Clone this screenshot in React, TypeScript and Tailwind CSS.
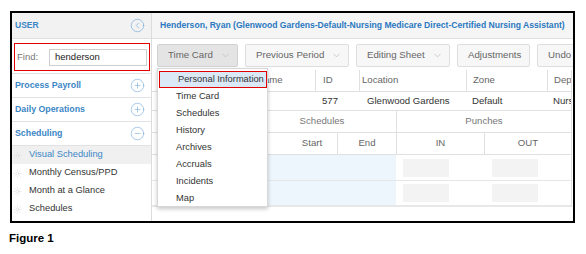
import { CircleChevronLeft, CirclePlus, CircleMinus, ChevronDown, Sun } from 'lucide-react';

const menuItems = [
  'Personal Information',
  'Time Card',
  'Schedules',
  'History',
  'Archives',
  'Accruals',
  'Incidents',
  'Map',
];

function ToolButton({ label, active, chevron, width }: { label: string; active?: boolean; chevron?: boolean; width: string }) {
  return (
    <div
      className={`flex h-[23px] shrink-0 items-center justify-between overflow-hidden rounded-[2px] border pl-[10px] pr-[6px] text-[9.7px] text-[#666] ${width} ${
        active ? 'border-[#d2d2d2] bg-[#e4e4e4]' : 'border-[#dedede] bg-[#f7f7f7]'
      }`}
    >
      <span className="whitespace-nowrap">{label}</span>
      {chevron && <ChevronDown className="h-[11px] w-[11px] text-[#aaa]" strokeWidth={1.2} />}
    </div>
  );
}

function SideSection({ label, open }: { label: string; open?: boolean }) {
  return (
    <div className="flex h-[24px] items-center justify-between border-b border-[#e2e2e2] pl-[3px] pr-[6px]">
      <span className="text-[8.8px] font-bold text-[#3b86c6]">{label}</span>
      {open ? (
        <CircleMinus className="h-[15px] w-[15px] text-[#79acdb]" strokeWidth={1} />
      ) : (
        <CirclePlus className="h-[15px] w-[15px] text-[#79acdb]" strokeWidth={1} />
      )}
    </div>
  );
}

function SubItem({ label, active }: { label: string; active?: boolean }) {
  return (
    <div className={`flex h-[18px] items-center gap-[7px] pl-[1px] ${active ? 'bg-[#f0f0f0]' : ''}`}>
      <Sun className="h-[9px] w-[9px] text-[#d5d5d5]" strokeWidth={1.5} />
      <span className={`text-[9.3px] ${active ? 'text-[#3b86c6]' : 'text-[#333]'}`}>{label}</span>
    </div>
  );
}

export default function App() {
  return (
    <div className="h-[254px] w-[586px] bg-white pt-[11px] font-['Liberation_Sans',Arial,sans-serif]">
      <div className="ml-[10px] flex h-[212px] w-[565px] overflow-hidden border-2 border-black">
        {/* Sidebar */}
        <div className="flex w-[140px] shrink-0 flex-col border-r border-[#dcdcdc]">
          <div className="flex h-[26px] items-center justify-between border-b border-[#e0e0e0] bg-[#f2f2f2] pl-[3px] pr-[6px]">
            <span className="text-[8.5px] font-bold text-[#3b86c6]">USER</span>
            <CircleChevronLeft className="h-[15px] w-[15px] text-[#6ea6d8]" strokeWidth={1} />
          </div>
          <div className="h-[35px] border-b border-[#e2e2e2] pl-[2px] pr-[1px] pt-[4px]">
            <div className="flex h-[28px] items-center border border-[#e00000] pl-[2px] pr-[2px]">
              <span className="w-[32px] text-[9.5px] text-[#777]">Find:</span>
              <div className="flex h-[17px] flex-1 items-center border border-[#cfcfcf] pl-[5px] text-[9.5px] text-[#222]">
                henderson
              </div>
            </div>
          </div>
          <SideSection label="Process Payroll" />
          <SideSection label="Daily Operations" />
          <SideSection label="Scheduling" open />
          <SubItem label="Visual Scheduling" active />
          <SubItem label="Monthly Census/PPD" />
          <SubItem label="Month at a Glance" />
          <SubItem label="Schedules" />
        </div>

        {/* Main area */}
        <div className="relative flex min-w-0 flex-1 flex-col overflow-hidden">
          <div className="flex h-[26px] shrink-0 items-center border-b border-[#e0e0e0] bg-[#f5f5f5] pl-[8px]">
            <span className="whitespace-nowrap text-[8.6px] font-bold text-[#2a78c0]">
              Henderson, Ryan (Glenwood Gardens-Default-Nursing Medicare Direct-Certified Nursing Assistant)
            </span>
          </div>

          <div className="flex h-[31px] shrink-0 gap-[7px] overflow-hidden pl-[5px] pt-[5px]">
            <ToolButton label="Time Card" active chevron width="w-[81px]" />
            <ToolButton label="Previous Period" chevron width="w-[104px]" />
            <ToolButton label="Editing Sheet" chevron width="w-[94px]" />
            <ToolButton label="Adjustments" width="w-[73px]" />
            <ToolButton label="Undo All Changes" width="w-[90px]" />
          </div>

          {/* Table */}
          <div className="w-[420px] border-r border-[#e0e0e0] text-[9.6px]">
            <div className="flex h-[22px] border-b border-[#e0e0e0] text-[#666]">
              <div className="w-[98px] shrink-0" />
              <div className="flex w-[65px] shrink-0 items-center pl-[7px]">Name</div>
              <div className="flex w-[44px] shrink-0 items-center border-l border-[#e0e0e0] pl-[7px]">ID</div>
              <div className="flex w-[107px] shrink-0 items-center border-l border-[#e0e0e0] pl-[2px]">Location</div>
              <div className="flex w-[81px] shrink-0 items-center border-l border-[#e0e0e0] pl-[6px]">Zone</div>
              <div className="flex min-w-0 flex-1 items-center overflow-hidden whitespace-nowrap border-l border-[#e0e0e0] pl-[6px]">Department</div>
            </div>
            <div className="flex h-[19px] border-b border-[#e0e0e0] text-[#333]">
              <div className="w-[163px] shrink-0" />
              <div className="flex w-[44px] shrink-0 items-center pl-[7px]">577</div>
              <div className="flex w-[107px] shrink-0 items-center pl-[8px]">Glenwood Gardens</div>
              <div className="flex w-[81px] shrink-0 items-center pl-[6px]">Default</div>
              <div className="flex min-w-0 flex-1 items-center overflow-hidden whitespace-nowrap pl-[6px]">Nursing</div>
            </div>
            <div className="flex h-[22px] border-b border-[#e0e0e0] text-[#777]">
              <div className="w-[96px] shrink-0" />
              <div className="flex w-[148px] shrink-0 items-center justify-center">Schedules</div>
              <div className="flex flex-1 items-center justify-center border-l border-[#e0e0e0]">Punches</div>
            </div>
            <div className="flex h-[22px] border-b border-[#e0e0e0] text-[#666]">
              <div className="w-[135px] shrink-0" />
              <div className="flex w-[50px] shrink-0 items-center justify-center">Start</div>
              <div className="flex w-[59px] shrink-0 items-center justify-center border-l border-[#e0e0e0]">End</div>
              <div className="flex w-[88px] shrink-0 items-center justify-center border-l border-[#e0e0e0]">IN</div>
              <div className="flex flex-1 items-center justify-center border-l border-[#e0e0e0]">OUT</div>
            </div>
            {[0, 1].map((r) => (
              <div key={r} className={`flex h-[26px] ${r === 0 ? 'border-b border-[#e6e6e6]' : 'border-b-2 border-[#e8e8e8]'}`}>
                <div className="w-[98px] shrink-0" />
                <div className="w-[146px] shrink-0 bg-[#eef6fd]" />
                <div className="flex w-[88px] shrink-0 items-center pl-[7px]">
                  <div className="h-[18px] w-[46px] bg-[#f3f3f3]" />
                </div>
                <div className="flex flex-1 items-center pl-[8px]">
                  <div className="h-[18px] w-[46px] bg-[#f3f3f3]" />
                </div>
              </div>
            ))}
          </div>

          {/* Dropdown menu */}
          <div className="absolute left-[5px] top-[55px] h-[139px] w-[111px] border border-[#d8d8d8] bg-white pt-[2px] shadow-[0_2px_4px_rgba(0,0,0,0.22)]">
            {menuItems.map((item, i) => (
              <div
                key={item}
                className={`flex h-[17px] items-center whitespace-nowrap pl-[18px] text-[9.3px] text-[#333] ${
                  i === 0 ? 'ml-[1px] border-[1.5px] border-[#e00000] bg-[#dbe9f7] pl-[16px]' : ''
                }`}
              >
                {item}
              </div>
            ))}
          </div>
        </div>
      </div>
      <div className="ml-[9px] mt-[7px] text-[11.5px] font-bold text-black">Figure 1</div>
    </div>
  );
}
